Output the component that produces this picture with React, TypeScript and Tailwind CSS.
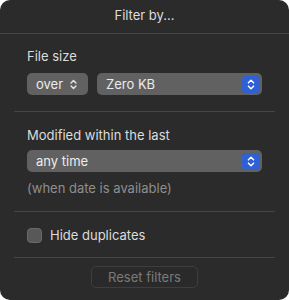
import React from 'react';

const Chevrons = ({ className }: { className?: string }) => (
  <svg viewBox="0 0 8 12" className={className} fill="none" stroke="currentColor" strokeWidth="1.6" strokeLinecap="round" strokeLinejoin="round">
    <path d="M1.2 4.2 4 1.4l2.8 2.8" />
    <path d="M1.2 7.8 4 10.6l2.8-2.8" />
  </svg>
);

const Popup = ({ label, wide }: { label: string; wide?: boolean }) =>
  wide ? (
    <div className="flex h-[22px] flex-1 items-center justify-between rounded-[5px] bg-[#616161] pl-[9px] pr-[2px]">
      <span className="text-[13px] text-[#ececec]">{label}</span>
      <span className="flex h-[17px] w-[18px] items-center justify-center rounded-[4px] bg-[#2f60d6] text-white">
        <Chevrons className="h-[11px] w-[8px]" />
      </span>
    </div>
  ) : (
    <div className="flex h-[22px] w-[61px] items-center gap-[7px] rounded-[5px] bg-[#616161] pl-[9px]">
      <span className="text-[13px] text-[#ececec]">{label}</span>
      <Chevrons className="h-[11px] w-[7px] text-[#e6e6e6]" />
    </div>
  );

export default function App() {
  return (
    <div className="h-[300px] w-[289px] bg-white" style={{ fontFamily: 'Inter, "Noto Sans", sans-serif' }}>
      <div className="flex h-full w-full flex-col overflow-hidden rounded-[10px] bg-[#2b2b2b] text-[13px] leading-4">
        {/* Title */}
        <div className="flex h-[34px] items-center justify-center border-b border-[#464646] pb-[3px] text-[#dedede]">
          Filter by...
        </div>

        {/* File size */}
        <div className="px-[27px] pt-[14px]">
          <div className="text-[#dcdcdc]">File size</div>
          <div className="mt-[9px] flex gap-[9px]">
            <Popup label="over" />
            <Popup label="Zero KB" wide />
          </div>
        </div>
        <div className="mx-[14px] mt-[16px] border-t border-[#464646]" />

        {/* Modified */}
        <div className="px-[27px] pt-[15px]">
          <div className="text-[#dcdcdc]">Modified within the last</div>
          <div className="mt-[7px] flex">
            <Popup label="any time" wide />
          </div>
          <div className="mt-[8px] text-[#8e8e8e]">(when date is available)</div>
        </div>
        <div className="mx-[14px] mt-[15px] border-t border-[#464646]" />

        {/* Hide duplicates */}
        <div className="flex items-center gap-[8px] px-[27px] pt-[15px]">
          <span className="h-[15px] w-[15px] rounded-[4px] border border-[#6a6a6a] bg-[#585858]" />
          <span className="text-[#dcdcdc]">Hide duplicates</span>
        </div>
        <div className="mx-[14px] mt-[14px] border-t border-[#464646]" />

        {/* Reset */}
        <div className="flex justify-center pt-[8px]">
          <div className="flex h-[22px] w-[107px] items-center justify-center rounded-[5px] border border-[#3e3e3e] bg-[#2a2a2a] text-[#7a7a7a]">
            Reset filters
          </div>
        </div>
      </div>
    </div>
  );
}
